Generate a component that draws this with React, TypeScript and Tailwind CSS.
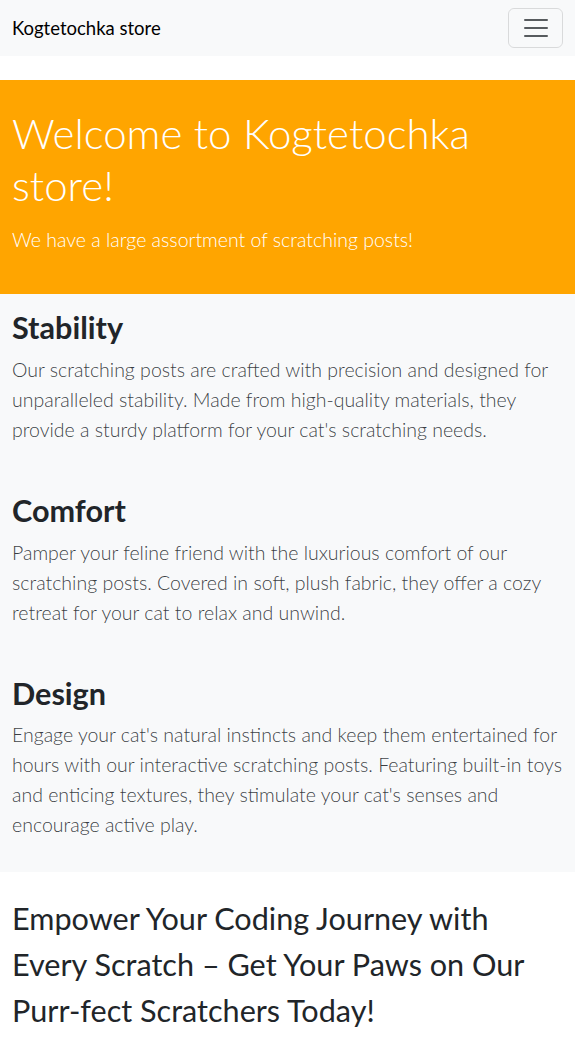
import React from 'react';

const features = [
  {
    title: 'Stability',
    text: "Our scratching posts are crafted with precision and designed for unparalleled stability. Made from high-quality materials, they provide a sturdy platform for your cat's scratching needs.",
  },
  {
    title: 'Comfort',
    text: 'Pamper your feline friend with the luxurious comfort of our scratching posts. Covered in soft, plush fabric, they offer a cozy retreat for your cat to relax and unwind.',
  },
  {
    title: 'Design',
    text: "Engage your cat's natural instincts and keep them entertained for hours with our interactive scratching posts. Featuring built-in toys and enticing textures, they stimulate your cat's senses and encourage active play.",
  },
];

const font = "font-['Lato','Open_Sans',sans-serif]";

export default function App() {
  return (
    <div className={`${font} min-h-[1052px] bg-white text-[#212529]`}>
      {/* navbar */}
      <nav className="flex items-center justify-between bg-[#f8f9fa] px-3 py-2">
        <span className="py-[5px] text-[18.5px] leading-[30px] text-black">
          Kogtetochka store
        </span>
        <button
          type="button"
          className="flex h-10 w-[55px] items-center justify-center rounded-md border border-[#0000001f]"
        >
          <svg width="30" height="30" viewBox="0 0 30 30">
            <path
              d="M4 7h22M4 15h22M4 23h22"
              stroke="#212529bf"
              strokeWidth="2"
              strokeLinecap="round"
            />
          </svg>
        </button>
      </nav>

      {/* hero */}
      <header className="mt-6 bg-[#ffa500] px-3 pt-7 pb-[39px] text-white">
        <h1 className="mb-[14px] text-[42px] leading-[51.6px] font-light">
          Welcome to Kogtetochka store!
        </h1>
        <p className="text-[19.5px] leading-[30px] font-light">
          We have a large assortment of scratching posts!
        </p>
      </header>

      {/* features */}
      <section className="bg-[#f8f9fa] px-3">
        {features.map((f) => (
          <div key={f.title} className="pt-4 pb-8">
            <h2 className="mb-2 text-[30.6px] leading-[1.2] font-bold">
              {f.title}
            </h2>
            <p className="text-[19.5px] leading-[30px] font-light text-[#212529e0]">
              {f.text}
            </p>
          </div>
        ))}
      </section>

      <p className="px-3 pt-6 text-[30.6px] leading-[1.5]">
        Empower Your Coding Journey with Every Scratch – Get Your Paws on Our
        Purr-fect Scratchers Today!
      </p>
    </div>
  );
}
